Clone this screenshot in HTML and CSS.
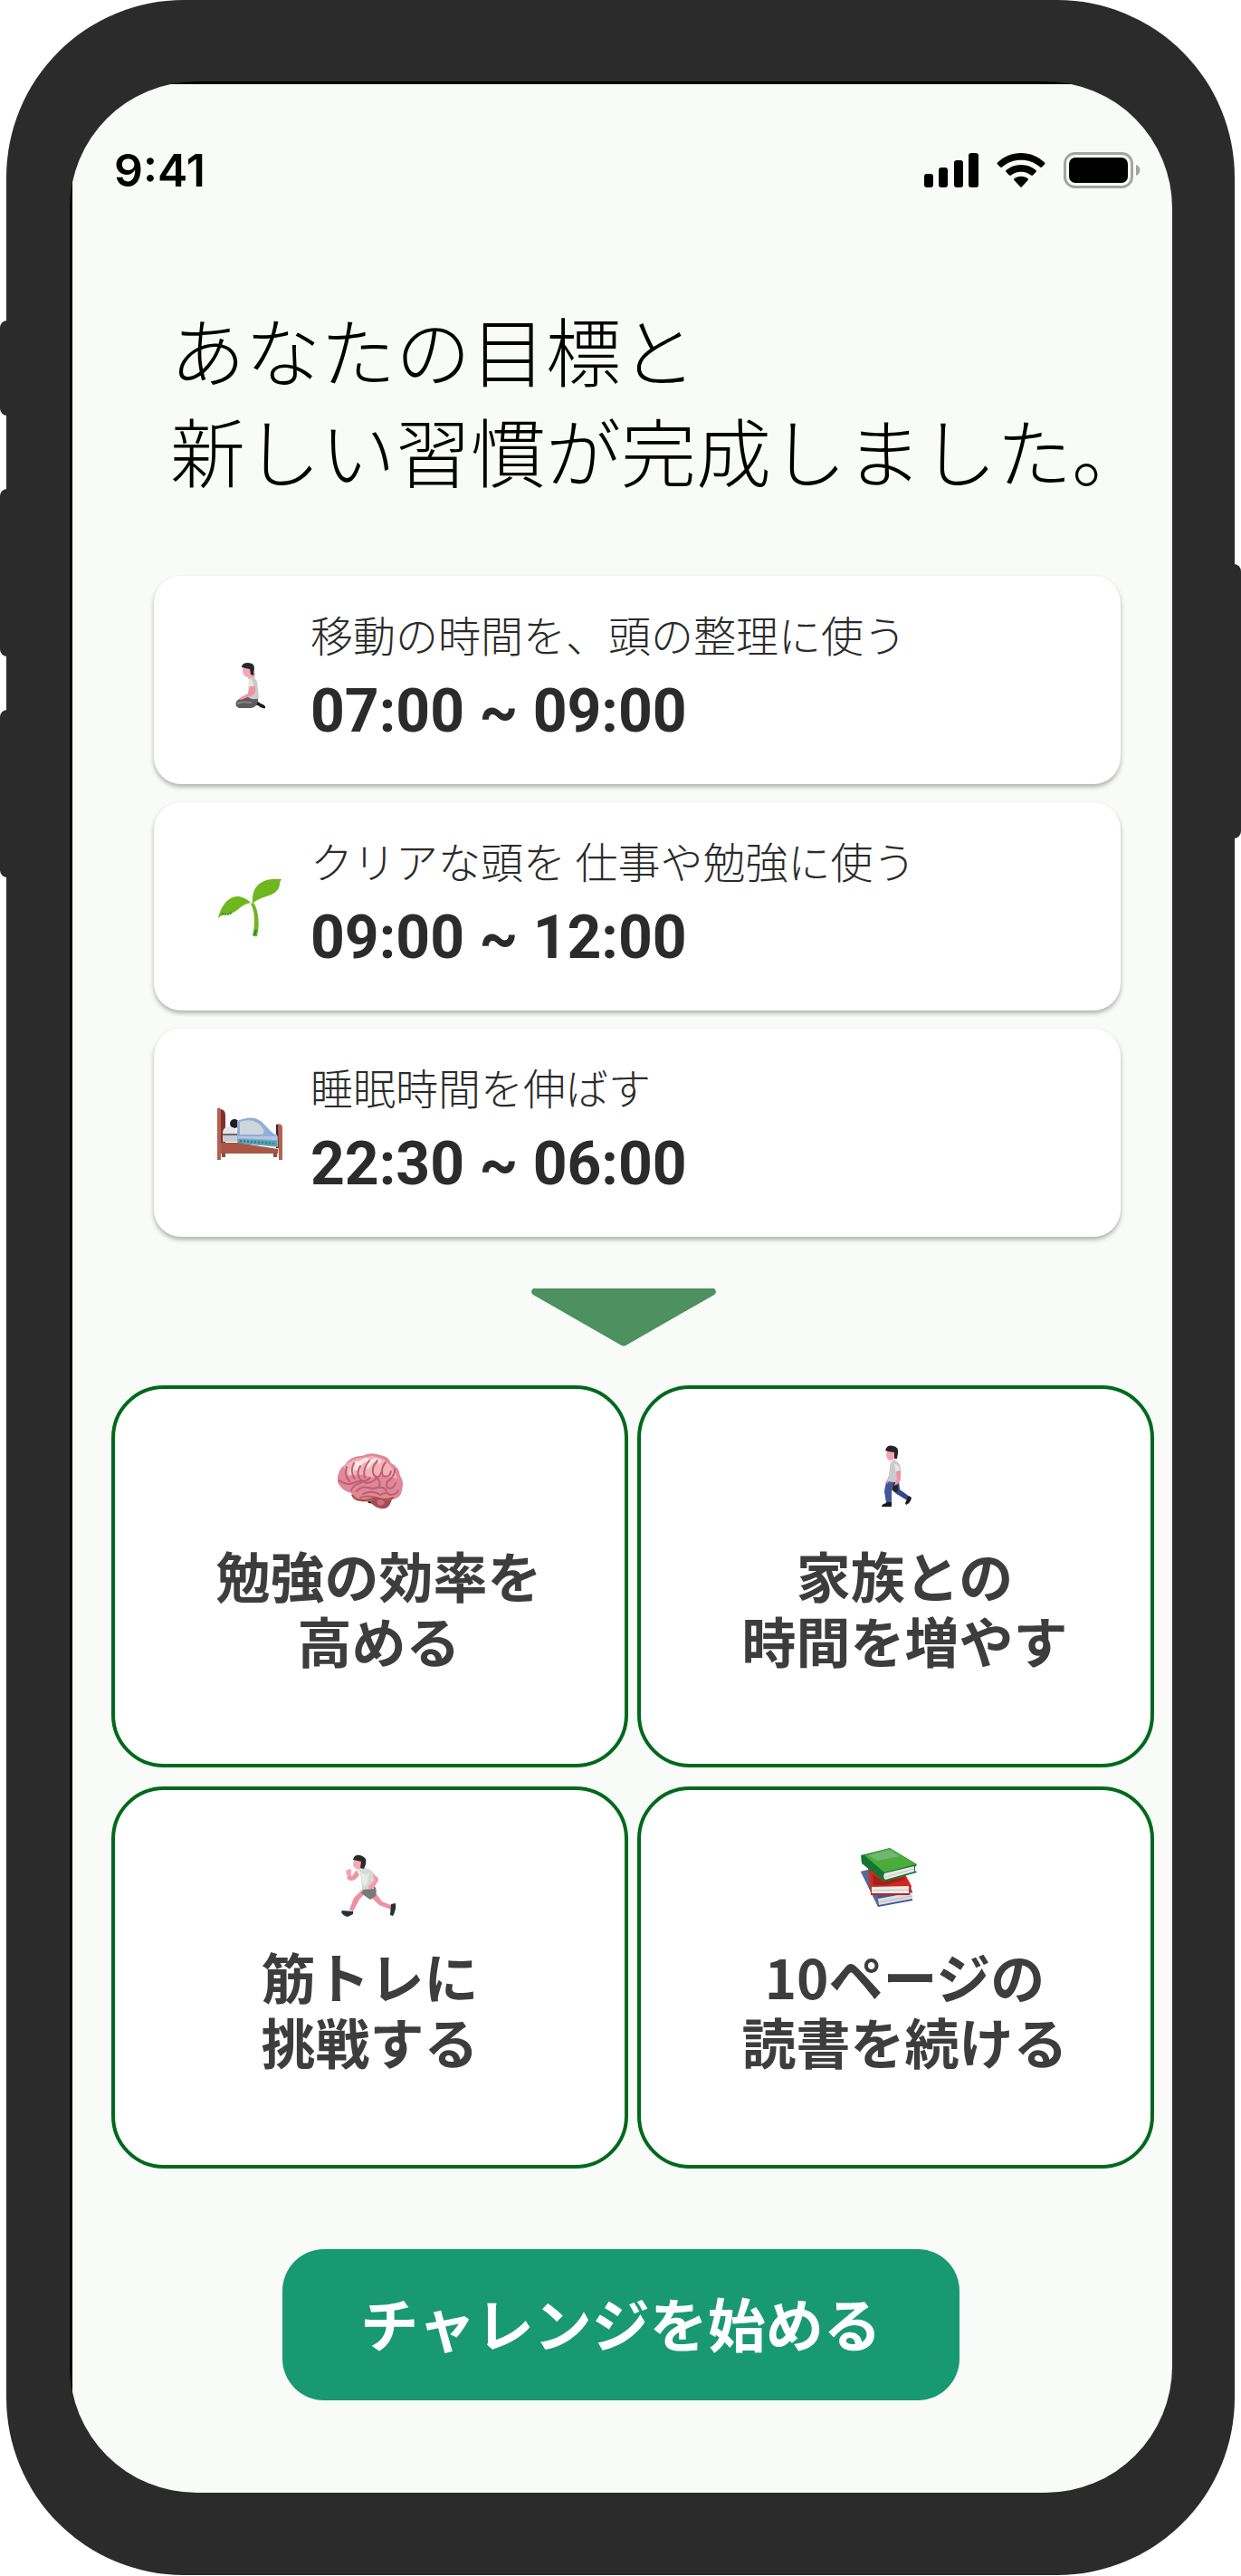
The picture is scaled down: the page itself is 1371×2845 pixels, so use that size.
FILE: index.html
```html
<!DOCTYPE html>
<html lang="ja">
<head>
<meta charset="utf-8">
<meta name="viewport" content="width=device-width, initial-scale=1">
<title>新しい習慣</title>
<link rel="stylesheet" href="styles.css">
</head>
<body>
<div class="phone">
  <span class="key key--mute"></span>
  <span class="key key--up"></span>
  <span class="key key--down"></span>
  <span class="key key--power"></span>
  <div class="screen">
    <header class="status">
      <time class="status__clock">9:41</time>
      <div class="status__icons">
        <svg width="60" height="40" viewBox="0 0 60 40" role="img" aria-label="電波">
          <rect x="0" y="24" width="10" height="15" rx="3"/>
          <rect x="16" y="17" width="10" height="22" rx="3"/>
          <rect x="33" y="9" width="10" height="30" rx="3"/>
          <rect x="49" y="1" width="11" height="38" rx="3"/>
        </svg>
        <svg width="54" height="40" viewBox="0 0 54 40" role="img" aria-label="Wi-Fi">
          <path d="M27 1C37 1 46 5 53 11.500Q54 12.500 53 13.500L50 16.500Q49 17.300 48 16.500C42 11.300 35 8.700 27 8.700S12 11.300 6 16.500Q5 17.300 4 16.500L1 13.500Q0 12.500 1 11.500C8 5 17 1 27 1Z"/>
          <path d="M27 14C33.500 14 39 16.300 43.500 20Q44.500 21 43.500 22L40 25.500Q39 26.300 38 25.500C35 23 31.500 21.700 27 21.700S19 23 16 25.500Q15 26.300 14 25.500L10.500 22Q9.500 21 10.500 20C15 16.300 20.500 14 27 14Z"/>
          <path d="M27 26.700C30 26.700 32.500 27.600 34.500 29.200Q35.500 30 34.600 31L27.700 38.400Q27 39.200 26.300 38.400L19.400 31Q18.500 30 19.500 29.200C21.500 27.600 24 26.700 27 26.700Z"/>
        </svg>
        <svg width="85" height="40" viewBox="0 0 85 40" role="img" aria-label="バッテリー">
          <rect x="1.500" y="1.500" width="74" height="37" rx="11" fill="none" stroke="#a3a5a3" stroke-width="3"/>
          <rect x="6" y="6" width="65" height="28" rx="7"/>
          <path d="M80 14C83 15 84.500 17.500 84.500 20S83 25 80 26Z" fill="#a3a5a3"/>
        </svg>
      </div>
    </header>

    <main class="content">
      <h1 class="title">あなたの目標と<br>新しい習慣が完成しました。</h1>

      <ul class="habits">
        <li class="habit">
          <svg class="habit__icon" viewBox="5 -2 72 72" aria-hidden="true">
            <path d="M46 52L53 57Q59 59 58 62Q55 63 50 59L42 58Z" fill="#1c1c1e"/>
            <path d="M44 46Q51 48 50 54Q49 61 42 62H29Q24 60 26 55Q30 50 44 46Z" fill="#5c5c5e"/>
            <path d="M27 57Q33 54 43 56" fill="none" stroke="#858585" stroke-width="2"/>
            <path d="M40 23L47 23L46 30L39 30Z" fill="#f2a5ae"/>
            <path d="M40 29Q46 26 49 33L51 51Q45 54 39 50Z" fill="#c9cbca"/>
            <path d="M40 30Q45 29 45 39H40Z" fill="#e6e8e6"/>
            <path d="M41 38H47Q48 46 44 48L31 53Q28 52 31 50L39 46Z" fill="#f0949f"/>
            <path d="M34 16L33 21Q34 28 39 28Q43 26 43 17Z" fill="#f5a9b0"/>
            <path d="M32 17Q32 12 39 12Q46 12 46 18L45 26L42 25L41 19Z" fill="#29292b"/>
          </svg>
          <div class="habit__text">
            <p class="habit__label">移動の時間を、頭の整理に使う</p>
            <p class="habit__time">07:00 ~ 09:00</p>
          </div>
        </li>
        <li class="habit">
          <svg class="habit__icon" viewBox="0 0 72 72" aria-hidden="true">
            <path d="M40 29C46 37 47 55 44 66Q41 67 39 65C42 52 42 40 37 30Z" fill="#6eb71f"/>
            <path d="M1 46C5 27 20 13 37 29C24 31 21 43 8 42Q4 43 1 46Z" fill="#6eb71f"/>
            <path d="M39 28C38 9 51 1 71 3Q69 5 69 9C66 24 51 19 39 30Z" fill="#6eb71f"/>
            <path d="M5 41Q11 43 16 40" fill="none" stroke="#35882c" stroke-width="2" stroke-dasharray="2 1"/>
            <path d="M41 65L43 59" stroke="#178456" stroke-width="2"/>
          </svg>
          <div class="habit__text">
            <p class="habit__label">クリアな頭を 仕事や勉強に使う</p>
            <p class="habit__time">09:00 ~ 12:00</p>
          </div>
        </li>
        <li class="habit">
          <svg class="habit__icon" viewBox="0 0 72 72" aria-hidden="true">
            <path d="M3 7Q9 7 9 14V56H3Z" fill="#7d302e"/>
            <path d="M65 24Q70 22 70 27V50H65Z" fill="#3d252a"/>
            <path d="M6 35H66V43H6Z" fill="#c8ccd2"/>
            <circle cx="19" cy="23" r="5" fill="#202024"/>
            <path d="M6 34Q6 26 14 26Q22 28 22 34Z" fill="#e7e6e4"/>
            <path d="M6 34H22V36H6Z" fill="#6b6a6d"/>
            <path d="M22 20Q43 11 53 25L61 33L67 37V49L22 44Z" fill="#91add8"/>
            <path d="M25 21Q42 15 51 29Q53 35 47 35H25Z" fill="#ced8dc"/>
            <path d="M23 37H66V41L23 39Z" fill="#b4c8e2"/>
            <path d="M23 40L66 42V48L23 45Z" fill="#57a6b0"/>
            <path d="M25 42L65 45" stroke="#416c9d" stroke-width="2" stroke-dasharray="2 2"/>
            <path d="M4 44L22 44L67 51V56H4Z" fill="#a75744"/>
            <path d="M0 6Q4 4 4 9V63H0Z" fill="#b56150"/>
            <path d="M67 24Q71 22 72 27V63H68Z" fill="#b56150"/>
            <path d="M5 55H9V60H5ZM62 55H66V60H62Z" fill="#934b40"/>
          </svg>
          <div class="habit__text">
            <p class="habit__label">睡眠時間を伸ばす</p>
            <p class="habit__time">22:30 ~ 06:00</p>
          </div>
        </li>
      </ul>

      <svg class="arrow" width="206" height="64" viewBox="0 0 206 64" aria-hidden="true">
        <path d="M3 0H203Q207 4 203 7L107 62Q103 65 99 62L3 7Q-1 4 3 0Z" fill="#4c915f"/>
      </svg>

      <ul class="goals">
        <li class="goal">
          <svg class="goal__icon" viewBox="0 0 76 76" aria-hidden="true">
            <path d="M4 40Q7 50 19 49L17 41Z" fill="#9e4d47"/>
            <path d="M33 57L44 56L43 63L36 62Z" fill="#32262b"/>
            <path d="M41 56Q50 51 62 58Q59 70 49 68Q40 65 38 60Z" fill="#a84a55"/>
            <path d="M2 39Q1 25 10 20Q17 9 29 10Q38 5 49 9Q58 10 61 18Q70 22 71 32Q76 38 73 48Q72 57 62 58Q51 61 44 57Q37 62 27 60Q18 60 17 51Q6 48 2 39Z" fill="#e08898"/>
            <path d="M9 22Q18 12 30 12Q45 7 57 17Q65 25 68 35Q48 29 40 34Q27 28 13 32Z" fill="#f4b2b9"/>
            <path d="M23 24Q30 12 36 15M35 22Q42 11 48 16M17 29Q20 16 26 18" fill="none" stroke="#fae7e7" stroke-width="4" stroke-linecap="round"/>
            <path d="M12 22Q9 31 15 38M20 18Q15 28 21 35M27 21Q22 29 27 36Q32 40 38 34M37 15Q29 25 32 34M46 15Q38 24 42 31Q48 37 51 26M55 17Q49 24 52 32Q60 34 61 27M65 25Q65 31 60 36Q54 39 57 45Q63 48 66 40M4 37Q12 43 19 40Q27 36 34 40Q42 39 45 34Q50 38 48 44Q42 47 36 45Q28 43 23 49M17 48Q20 41 28 40M30 52Q41 47 49 53Q56 49 60 53Q67 53 69 48M27 56Q36 53 44 56M48 45Q54 44 56 49" fill="none" stroke="#bc6070" stroke-width="2" stroke-linecap="round"/>
            <path d="M18 53Q22 60 33 59Q40 58 44 56Q54 60 64 56" fill="none" stroke="#a3503f" stroke-width="2"/>
            <path d="M45 60Q50 57 54 61Q52 66 47 64Z" fill="#d16c80"/>
          </svg>
          <p class="goal__label goal__label--inset">勉強の効率を<br>高める</p>
        </li>
        <li class="goal">
          <svg class="goal__icon" viewBox="0 0 76 76" aria-hidden="true">
            <path d="M33 38L41 37L42 47L53 55L50 59L37 51Z" fill="#33488c"/>
            <path d="M35 39L40 39L40 49L36 50L31 44Z" fill="#23242c"/>
            <path d="M52 54L55 56Q54 62 49 64L48 62L50 58Z" fill="#171a20"/>
            <path d="M27 38H36L33 50V62H27L25 49Z" fill="#405799"/>
            <path d="M27 61H33V66H22Q22 63 27 62Z" fill="#171a20"/>
            <path d="M30 32L31 37L28 41L27 39ZM36 14L38 17L36 20L32 18Z" fill="#e98c99"/>
            <path d="M34 15Q41 14 43 23V38Q36 40 29 38L31 23Q31 18 34 15Z" fill="#c9ccca"/>
            <path d="M36 19Q41 18 42 27L38 29Z" fill="#e5e8e5"/>
            <path d="M38 27L43 26Q44 35 40 41L36 43L37 39L39 36Z" fill="#f092a0"/>
            <path d="M28 3L27 9Q28 16 33 15L37 12L37 3Z" fill="#f6a5ae"/>
            <path d="M26 4Q28-3 35-1Q41 0 40 7L39 13L36 13V6L29 5Z" fill="#242427"/>
          </svg>
          <p class="goal__label goal__label--inset">家族との<br>時間を増やす</p>
        </li>
        <li class="goal">
          <svg class="goal__icon" viewBox="1 -2 76 76" aria-hidden="true">
            <path d="M35 46L27 55L20 68L16 66L21 53L31 43ZM43 45L52 57L64 62L62 66L49 61L37 50Z" fill="#f0909e"/>
            <path d="M8 67L20 68V71L14 74Q9 73 7 69ZM62 60L67 59Q68 66 64 73L61 72Z" fill="#26303a"/>
            <path d="M34 41L44 40Q47 45 45 51L39 55L29 48Z" fill="#77797a"/>
            <path d="M26 20Q38 18 44 27L43 43L30 44L29 31Z" fill="#d5d9d4"/>
            <path d="M28 23Q33 31 38 25L35 39H31Z" fill="#e8ece7"/>
            <path d="M24 22L27 28L22 33Q16 36 13 31L16 27L19 29Z" fill="#ef96a3"/>
            <path d="M12 24Q14 20 18 22V28L14 30Z" fill="#f3a5af"/>
            <path d="M42 27Q49 30 48 34L43 42L38 44L37 40L43 34Z" fill="#f49cab"/>
            <path d="M21 11L20 17Q23 23 28 21L32 13Z" fill="#f6a9b1"/>
            <path d="M20 11Q21 5 28 6Q36 8 34 16L32 21L28 20L29 13Z" fill="#29282b"/>
          </svg>
          <p class="goal__label">筋トレに<br>挑戦する</p>
        </li>
        <li class="goal">
          <svg class="goal__icon" viewBox="0 0 76 76" aria-hidden="true">
            <path d="M-1 26L7 24L54 44L56 48V58L18 65Z" fill="#3f569a"/>
            <path d="M-1 26L7 25L19 57L18 64Z" fill="#56699c"/>
            <path d="M18 56L56 49V56L19 63Z" fill="#dcdee1"/>
            <path d="M19 60L56 53" stroke="#b9bcc6"/>
            <path d="M7 20L48 29L55 42L53 51H10Z" fill="#d3281f"/>
            <path d="M7 20L11 42V50L8 43Z" fill="#a8403a"/>
            <path d="M11 43L52 42V50H11Z" fill="#ececea"/>
            <path d="M11 47L52 46" stroke="#c6c4c4"/>
            <path d="M10 51H53" stroke="#bd241e" stroke-width="2"/>
            <path d="M12 29L24 37L47 32L48 35L27 41H13Z" fill="#9e231e"/>
            <path d="M-1 8L31 0L61 18L59 21V25L61 27L25 37L0 17Z" fill="#157535"/>
            <path d="M3 8L31 0L60 18L25 27Z" fill="#4bac3b"/>
            <path d="M7 8L31 2L42 9L18 14Z" fill="#6fb673"/>
            <path d="M25 28L58 20V26L26 35Q23 32 25 28Z" fill="#e8eae6"/>
            <path d="M26 32L58 23" stroke="#c2c7c0"/>
          </svg>
          <p class="goal__label goal__label--inset">10ページの<br>読書を続ける</p>
        </li>
      </ul>

      <button class="start" type="button">チャレンジを始める</button>
    </main>
  </div>
</div>
</body>
</html>
```
FILE: styles.css
```css
* {
  box-sizing: border-box;
}

body {
  margin: 0;
  background: #fff;
  font-family: "Noto Sans CJK JP", sans-serif;
}

h1, p, ul {
  margin: 0;
  padding: 0;
}

ul {
  list-style: none;
}

.phone {
  position: relative;
  margin: 0 7px;
  padding: 90px 69px 91px 70px;
  border-radius: 196px;
  background: #2b2b2b;
}

/* Hardware keys on the sides of the frame */
.key {
  position: absolute;
  left: -7px;
  width: 16px;
  border-radius: 9px;
  background: #2b2b2b;
}

.key--mute { top: 354px; height: 105px; }
.key--up { top: 540px; height: 185px; }
.key--down { top: 784px; height: 185px; }
.key--power { top: 623px; right: -7px; left: auto; height: 303px; }

.screen {
  overflow: hidden;
  border-radius: 140px;
  background: linear-gradient(#f9fbf8, #f9fbf8) 3px 3px no-repeat #000;
}

.status {
  display: flex;
  justify-content: space-between;
  align-items: center;
  padding: 66px 35px 0 49px;
}

.status__clock {
  font: 600 50px/64px Inter, sans-serif;
  color: #000;
}

.status__icons {
  display: flex;
  align-items: center;
  gap: 20px;
}

.content {
  display: flex;
  flex-direction: column;
  padding: 110px 20px 102px 46px;
}

.title {
  padding-left: 65px;
  font-size: 83px;
  font-weight: 300;
  line-height: 111px;
  color: #000;
  white-space: nowrap;
}

.habits {
  display: grid;
  gap: 20px;
  padding: 84px 37px 0 47px;
}

.habit {
  display: flex;
  align-items: center;
  gap: 31px;
  height: 230px;
  padding: 0 70px;
  border-radius: 30px;
  background: #fff;
  box-shadow: 0 3px 5px rgba(0, 0, 0, 0.3);
}

.habit__icon {
  flex: none;
  width: 72px;
  height: 72px;
  margin-top: 6px;
  overflow: visible;
}

.habit__text {
  display: grid;
  gap: 9px;
  padding-bottom: 10px;
  color: #2b2b2b;
  white-space: nowrap;
}

.habit__label {
  font-size: 47px;
  font-weight: 300;
  line-height: 70px;
}

.habit__time {
  font: 700 66px/84px Roboto, sans-serif;
}

.arrow {
  align-self: center;
  margin: 57px 20px 43px 0;
}

.goals {
  display: grid;
  grid-template-columns: 1fr 1fr;
  gap: 21px 10px;
}

.goal {
  display: flex;
  flex-direction: column;
  align-items: center;
  gap: 29px;
  height: 422px;
  padding-top: 64px;
  border: 4px solid #00691b;
  border-radius: 58px;
  background: #fff;
}

.goal__icon {
  width: 76px;
  height: 76px;
  overflow: visible;
}

.goal__label {
  font-size: 60px;
  font-weight: 700;
  line-height: 72px;
  text-align: center;
  color: #3d3d3d;
  white-space: nowrap;
}

.goal__label--inset {
  padding-left: 20px;
}

.start {
  align-self: center;
  margin: 89px 26px 0 0;
  padding: 33px 86px 39px;
  border: 0;
  border-radius: 46px;
  background: #199971;
  color: #fff;
  font: 700 64px/95px "Noto Sans CJK JP", sans-serif;
}
```
